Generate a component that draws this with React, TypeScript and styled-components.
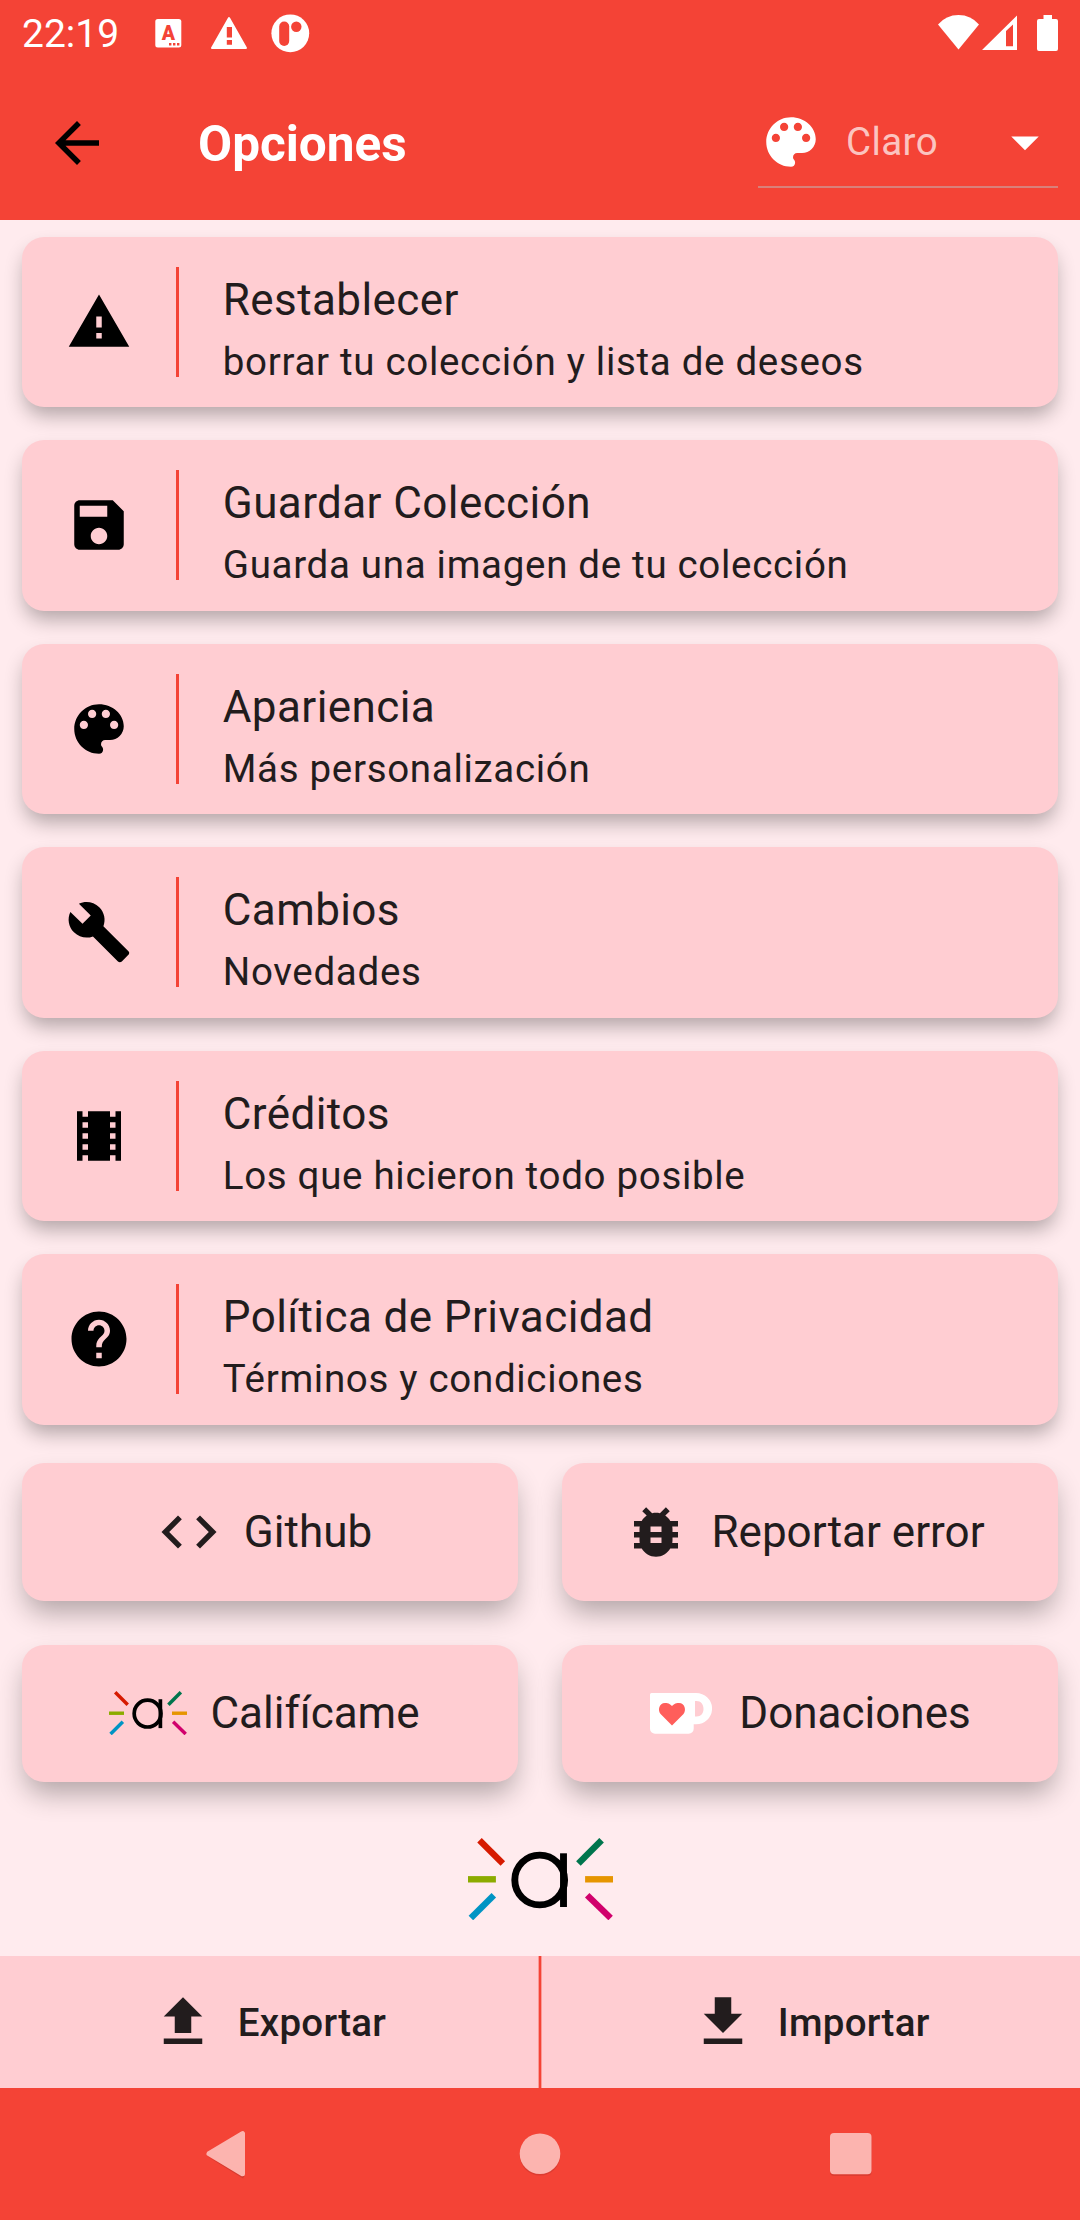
import React from "react";
import styled, { createGlobalStyle } from "styled-components";

const GlobalStyle = createGlobalStyle`
  * { box-sizing: border-box; }
  body { margin: 0; background: #ffebee; }
  svg { display: block; flex: none; }
`;

const paths = {
  back: "M20 11H7.83l5.59-5.59L12 4l-8 8 8 8 1.41-1.41L7.83 13H20v-2z",
  dropDown: "M7 10l5 5 5-5z",
  warning: "M1 21h22L12 2 1 21zm12-3h-2v-2h2v2zm0-4h-2v-4h2v4z",
  save: "M17 3H5c-1.11 0-2 .9-2 2v14c0 1.1.89 2 2 2h14c1.1 0 2-.9 2-2V7l-4-4zm-5 16c-1.66 0-3-1.34-3-3s1.34-3 3-3 3 1.34 3 3-1.34 3-3 3zm3-10H5V5h10v4z",
  palette:
    "M12 3c-4.97 0-9 4.03-9 9s4.03 9 9 9c.83 0 1.5-.67 1.5-1.5 0-.39-.15-.74-.39-1.01-.23-.26-.38-.61-.38-.99 0-.83.67-1.5 1.5-1.5H16c2.76 0 5-2.24 5-5 0-4.42-4.03-8-9-8zm-5.5 9c-.83 0-1.5-.67-1.5-1.5S5.67 9 6.5 9 8 9.67 8 10.5 7.33 12 6.5 12zm3-4C8.67 8 8 7.33 8 6.5S8.67 5 9.5 5s1.5.67 1.5 1.5S10.33 8 9.5 8zm5 0c-.83 0-1.5-.67-1.5-1.5S13.67 5 14.5 5s1.5.67 1.5 1.5S15.33 8 14.5 8zm3 4c-.83 0-1.5-.67-1.5-1.5S16.67 9 17.5 9s1.5.67 1.5 1.5-.67 1.5-1.5 1.5z",
  build:
    "M22.7 19l-9.1-9.1c.9-2.3.4-5-1.5-6.9-2-2-5-2.4-7.4-1.3L9 6 6 9 1.6 4.7C.4 7.1.9 10.1 2.9 12.1c1.9 1.9 4.6 2.4 6.9 1.5l9.1 9.1c.4.4 1 .4 1.4 0l2.3-2.3c.5-.4.5-1.1.1-1.4z",
  theaters:
    "M18 3v2h-2V3H8v2H6V3H4v18h2v-2h2v2h8v-2h2v2h2V3h-2zM8 17H6v-2h2v2zm0-4H6v-2h2v2zm0-4H6V7h2v2zm10 8h-2v-2h2v2zm0-4h-2v-2h2v2zm0-4h-2V7h2v2z",
  help: "M12 2C6.48 2 2 6.48 2 12s4.48 10 10 10 10-4.48 10-10S17.52 2 12 2zm1 17h-2v-2h2v2zm2.07-7.75l-.9.92C13.45 12.9 13 13.5 13 15h-2v-.5c0-1.1.45-2.1 1.17-2.83l1.24-1.26c.37-.36.59-.86.59-1.41 0-1.1-.9-2-2-2s-2 .9-2 2H8c0-2.21 1.79-4 4-4s4 1.79 4 4c0 .88-.36 1.68-.93 2.25z",
  code: "M9.4 16.6L4.8 12l4.6-4.6L8 6l-6 6 6 6 1.4-1.4zm5.2 0l4.6-4.6-4.6-4.6L16 6l6 6-6 6-1.4-1.4z",
  bug: "M20 8h-2.81c-.45-.78-1.07-1.45-1.82-1.96L17 4.41 15.59 3l-2.17 2.17C12.96 5.06 12.49 5 12 5c-.49 0-.96.06-1.41.17L8.41 3 7 4.41l1.62 1.63C7.88 6.55 7.26 7.22 6.81 8H4v2h2.09c-.05.33-.09.66-.09 1v1H4v2h2v1c0 .34.04.67.09 1H4v2h2.81c1.04 1.79 2.97 3 5.19 3s4.15-1.21 5.19-3H20v-2h-2.09c.05-.33.09-.66.09-1v-1h2v-2h-2v-1c0-.34-.04-.67-.09-1H20V8zm-6 8h-4v-2h4v2zm0-4h-4v-2h4v2z",
  upload: "M9 16h6v-6h4l-7-7-7 7h4v6zM5 18h14v2H5v-2z",
  download: "M19 9h-4V3H9v6H5l7 7 7-7zM5 18v2h14v-2H5z",
};

function Icon({ name }: { name: keyof typeof paths }) {
  return (
    <svg width="66" height="66" viewBox="0 0 24 24" fill="currentColor">
      <path d={paths[name]} />
    </svg>
  );
}

function Logo({ width }: { width: number }) {
  return (
    <svg width={width} height={(width * 82) / 145} viewBox="0 0 145 82" fill="none" strokeWidth="6.4">
      <path stroke="#d61a00" d="M11.5 2.3L34.8 25.5" />
      <path stroke="#8cab00" d="M0 41.3H27.9" />
      <path stroke="#0094c4" d="M2.9 80L25.8 57.2" />
      <path stroke="#00754d" d="M133.6 2.2L110.4 25.6" />
      <path stroke="#e69500" d="M117.1 41.3H145" />
      <path stroke="#d1006c" d="M119.2 57.2L142.6 80" />
      <circle cx="71.7" cy="42" r="24.9" stroke="#000" strokeWidth="6.9" />
      <path stroke="#000" strokeWidth="6.9" d="M95.5 15.3V69" />
    </svg>
  );
}

function Mug() {
  return (
    <svg width="62" height="41" viewBox="0 0 62 41">
      <path
        fill="#fff"
        fillRule="evenodd"
        d="M1.5 0H46a16 15.6 0 0 1 0 31.3h-2.3v4.4a5 5 0 0 1-5 5H5a5 5 0 0 1-5-5V1.5A1.5 1.5 0 0 1 1.5 0zM45 8v15.5h1.5c4.5 0 7-3 7-7.5s-2.5-8-7-8z"
      />
      <path fill="#ff5e5b" d="M22 32.5L10.6 21C7.5 17.5 9 10 15 10c4 0 5.5 1.5 7 3 1.5-1.5 3-3 7-3 6 0 7.5 7.5 4.5 11z" />
    </svg>
  );
}

const Screen = styled.div`
  width: 1080px;
  height: 2220px;
  display: flex;
  flex-direction: column;
  background: #ffebee;
  color: #221c1d;
  font-family: Roboto, "Noto Sans", sans-serif;
  overflow: hidden;
`;

const StatusBar = styled.header`
  height: 66px;
  flex: none;
  display: flex;
  justify-content: space-between;
  padding: 0 22px;
  background: #f44336;
  color: #fff;
`;

const Clock = styled.span`
  width: 133px;
  font-size: 39px;
  line-height: 68px;
`;

const StatusGroup = styled.div`
  display: flex;
`;

const AppBar = styled.nav`
  height: 154px;
  flex: none;
  display: flex;
  align-items: center;
  padding: 0 22px 0 44px;
  background: #f44336;
  color: #fff;
`;

const BackButton = styled.span`
  width: 154px;
  color: #000;
`;

const PageTitle = styled.h1`
  margin: 2px 0 0;
  flex: 1;
  font-size: 49.5px;
  line-height: 58px;
  font-weight: 700;
`;

const ThemeSelect = styled.div`
  width: 300px;
  height: 90px;
  display: flex;
  align-items: center;
  border-bottom: 2px solid #d9807a;
`;

const ThemeName = styled.span`
  flex: 1;
  padding-left: 22px;
  font-size: 38.5px;
  line-height: 46px;
  letter-spacing: 0.41px;
  color: rgba(255, 255, 255, 0.7);
`;

const Content = styled.main`
  flex: 1;
  display: flex;
  flex-direction: column;
  align-items: center;
  padding: 16.5px 22px 0;
`;

const OptionList = styled.section`
  width: 100%;
  display: flex;
  flex-direction: column;
  gap: 33px;
`;

const Surface = styled.div`
  border-radius: 22px;
  background: #ffcdd2;
`;

const OptionCard = styled(Surface)`
  height: 170.5px;
  display: flex;
  align-items: center;
  padding-left: 44px;
  color: #000;
  box-shadow: 0 11px 20px -3px rgba(0, 0, 0, 0.31);
`;

const Rule = styled.span`
  width: 2.75px;
  height: 110px;
  margin: 0 44px;
  background: #f44336;
`;

const OptionText = styled.div`
  padding-top: 16px;
  color: #221c1d;
`;

const OptionTitle = styled.h2`
  margin: 0;
  font-size: 44px;
  line-height: 64px;
  font-weight: 400;
  letter-spacing: 0.41px;
`;

const OptionHint = styled.p`
  margin: 0;
  font-size: 38.5px;
  line-height: 60px;
  letter-spacing: 0.69px;
`;

const ActionGrid = styled.section`
  width: 100%;
  display: grid;
  grid-template-columns: 1fr 1fr;
  gap: 44px;
  margin-top: 38.5px;
`;

const ActionCard = styled(Surface)`
  height: 137.5px;
  display: flex;
  align-items: center;
  justify-content: center;
  gap: 22px;
  padding-right: 12px;
  font-size: 44px;
  box-shadow: 0 15px 28px -4px rgba(0, 0, 0, 0.31);
`;

const BadgeSlot = styled.span<{ $inset?: number }>`
  width: 80px;
  display: flex;
  justify-content: center;
  padding-left: ${(p) => p.$inset ?? 0}px;
`;

const LogoRow = styled.div`
  margin-top: 56px;
`;

const BottomBar = styled.footer`
  height: 132px;
  flex: none;
  display: grid;
  grid-template-columns: 1fr 4px 1fr;
  background: #ffcdd2;
`;

const BarDivider = styled.span`
  background: #f44336;
  border: solid #fb9a97;
  border-width: 0 1px;
`;

const BarAction = styled.div<{ $indent: number }>`
  display: flex;
  align-items: center;
  gap: 22px;
  padding-left: ${(p) => p.$indent}px;
  font-size: 38.5px;
  font-weight: 500;
  letter-spacing: 0.27px;
`;

const SystemNav = styled.div`
  height: 132px;
  flex: none;
  display: flex;
  align-items: center;
  justify-content: space-between;
  padding: 0 208px 0 205px;
  background: #f44336;
  color: #fcb4af;
`;

const options: { icon: keyof typeof paths; title: string; hint: string }[] = [
  { icon: "warning", title: "Restablecer", hint: "borrar tu colección y lista de deseos" },
  { icon: "save", title: "Guardar Colección", hint: "Guarda una imagen de tu colección" },
  { icon: "palette", title: "Apariencia", hint: "Más personalización" },
  { icon: "build", title: "Cambios", hint: "Novedades" },
  { icon: "theaters", title: "Créditos", hint: "Los que hicieron todo posible" },
  { icon: "help", title: "Política de Privacidad", hint: "Términos y condiciones" },
];

export default function App() {
  return (
    <Screen>
      <GlobalStyle />
      <StatusBar>
        <StatusGroup>
          <Clock>22:19</Clock>
          <svg width="160" height="66" viewBox="155 0 160 66" fill="#fff">
            <rect x="155.300" y="19" width="26" height="28.500" rx="2.500" />
            <text x="168.300" y="40" textAnchor="middle" fontFamily="Roboto" fontWeight="900" fontSize="19.500" fill="#f44336">A</text>
            <path fill="#f44336" d="M169 43h2.400v2.400h-2.400zM173 43h2.400v2.400h-2.400zM177 43h2.400v2.400h-2.400z" />
            <path stroke="#fff" strokeWidth="2" strokeLinejoin="round" d="M229 18L246 48H212z" />
            <path fill="#f44336" d="M226.800 27h5.200v10.500h-5.200zM226.800 40h5.200v4.800h-5.200z" />
            <circle cx="290.300" cy="33.300" r="18.900" />
            <rect x="279.200" y="21.500" width="10" height="24.500" rx="5" fill="#f44336" />
            <circle cx="296.300" cy="26.700" r="5.200" fill="#f44336" />
          </svg>
        </StatusGroup>
        <svg width="120" height="66" viewBox="938 0 120 66" fill="#fff">
          <path d="M938 24.500Q946 15 958.500 15T979 24.500L958.500 49.500z" />
          <path fillRule="evenodd" d="M982 50L1017 15.500V50zM1006 46.200h7V24.500l-7 6.500z" />
          <path d="M1043.500 15h8.500v4h4a2 2 0 0 1 2 2v28a2 2 0 0 1-2 2h-17a2 2 0 0 1-2-2V21a2 2 0 0 1 2-2h4.500z" />
        </svg>
      </StatusBar>
      <AppBar>
        <BackButton>
          <Icon name="back" />
        </BackButton>
        <PageTitle>Opciones</PageTitle>
        <ThemeSelect>
          <Icon name="palette" />
          <ThemeName>Claro</ThemeName>
          <Icon name="dropDown" />
        </ThemeSelect>
      </AppBar>
      <Content>
        <OptionList>
          {options.map((o) => (
            <OptionCard key={o.icon}>
              <Icon name={o.icon} />
              <Rule />
              <OptionText>
                <OptionTitle>{o.title}</OptionTitle>
                <OptionHint>{o.hint}</OptionHint>
              </OptionText>
            </OptionCard>
          ))}
        </OptionList>
        <ActionGrid>
          <ActionCard>
            <Icon name="code" />
            Github
          </ActionCard>
          <ActionCard>
            <Icon name="bug" />
            Reportar error
          </ActionCard>
          <ActionCard>
            <BadgeSlot>
              <Logo width={78} />
            </BadgeSlot>
            Califícame
          </ActionCard>
          <ActionCard>
            <BadgeSlot $inset={7}>
              <Mug />
            </BadgeSlot>
            Donaciones
          </ActionCard>
        </ActionGrid>
        <LogoRow>
          <Logo width={145} />
        </LogoRow>
      </Content>
      <BottomBar>
        <BarAction $indent={149.75}>
          <Icon name="upload" />
          Exportar
        </BarAction>
        <BarDivider />
        <BarAction $indent={147.75}>
          <Icon name="download" />
          Importar
        </BarAction>
      </BottomBar>
      <SystemNav>
        <svg width="44" height="50" viewBox="0 0 44 50" fill="currentColor" stroke="currentColor" strokeWidth="5" strokeLinejoin="round">
          <path stroke="none" fill="#d63b30" d="M1.500 27L38 49.500 39.500 47z" />
          <path d="M4 24.700L37.500 4.600V44.800z" />
        </svg>
        <svg width="42" height="46" viewBox="0 0 42 46">
          <circle cx="21" cy="24.300" r="20.300" fill="#dc3c31" />
          <circle cx="21" cy="22.700" r="20.300" fill="currentColor" />
        </svg>
        <svg width="42" height="46" viewBox="0 0 42 46">
          <rect x="0" y="3.500" width="41.500" height="41.500" rx="4" fill="#dc3c31" />
          <rect x="0" y="2" width="41.500" height="41.300" rx="4" fill="currentColor" />
        </svg>
      </SystemNav>
    </Screen>
  );
}
